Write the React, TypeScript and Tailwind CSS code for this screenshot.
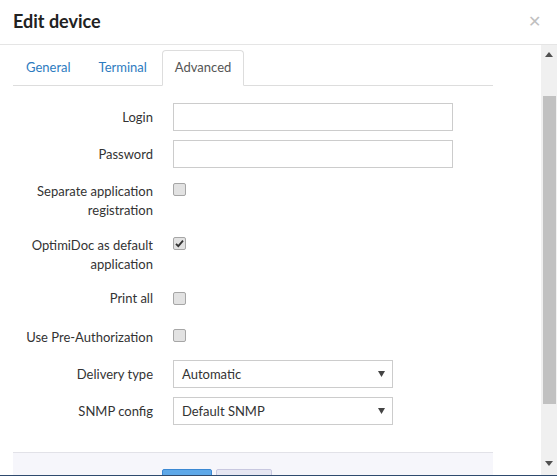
import { useState } from "react";

const font = { fontFamily: "Lato, 'Open Sans', sans-serif" };

function Checkbox({ checked }: { checked?: boolean }) {
  return (
    <div className="w-[13px] h-[13px] rounded-[2px] border border-[#a6a6a6] bg-[#e2e2e2] flex items-center justify-center">
      {checked && (
        <svg width="9" height="9" viewBox="0 0 9 9">
          <path d="M1 4.8 L3.3 7.2 L8 1.6" stroke="#333" strokeWidth="1.8" fill="none" />
        </svg>
      )}
    </div>
  );
}

function Select({ value }: { value: string }) {
  return (
    <div className="w-[220px] h-[28px] border border-[#ccc] flex items-center justify-between pl-[8px] pr-[7px] text-[13px] text-[#333]">
      <span>{value}</span>
      <svg width="7" height="6" viewBox="0 0 7 6">
        <path d="M0 0 H7 L3.5 6 Z" fill="#444" />
      </svg>
    </div>
  );
}

export default function App() {
  const [tab] = useState("Advanced");
  const tabs = ["General", "Terminal", "Advanced"];

  return (
    <div className="w-[557px] h-[476px] bg-white flex flex-col overflow-hidden text-[#333]" style={font}>
      {/* header */}
      <div className="h-[45px] shrink-0 border-b border-[#e5e5e5] flex items-center justify-between pl-[13px] pr-[16px]">
        <h1 className="text-[18px] font-bold text-[#222] leading-none mt-[-2px]">Edit device</h1>
        <span className="text-[#c0c0c0] text-[16px] leading-none mt-[-3px]">✕</span>
      </div>

      <div className="flex flex-1 min-h-0">
        {/* body */}
        <div className="flex-1 min-w-0 overflow-hidden flex flex-col">
          <div className="ml-[13px] w-[480px] pt-[5px]">
            <div className="flex border-b border-[#ddd] text-[13px] leading-[19px]">
              {tabs.map((t) =>
                t === tab ? (
                  <div
                    key={t}
                    className="px-[12px] pt-[7px] pb-[7px] border border-[#ddd] border-b-white rounded-t-[4px] -mb-px bg-white text-[#555] mr-[2px]"
                  >
                    {t}
                  </div>
                ) : (
                  <div
                    key={t}
                    className="px-[12px] pt-[7px] pb-[7px] border border-transparent text-[#2d7bc0] mr-[2px]"
                  >
                    {t}
                  </div>
                )
              )}
            </div>

            <div className="text-[13px] leading-[19px]">
              <div className="flex mt-[17px] items-center">
                <div className="w-[140px] text-right">Login</div>
                <div className="ml-[20px] w-[280px] h-[28px] border border-[#ccc]" />
              </div>
              <div className="flex mt-[9px] items-center">
                <div className="w-[140px] text-right">Password</div>
                <div className="ml-[20px] w-[280px] h-[28px] border border-[#ccc]" />
              </div>
              <div className="flex mt-[14px] items-start">
                <div className="w-[140px] text-right">
                  Separate application
                  <br />
                  registration
                </div>
                <div className="ml-[20px] mt-[1px]">
                  <Checkbox />
                </div>
              </div>
              <div className="flex mt-[16px] items-start">
                <div className="w-[140px] text-right">
                  OptimiDoc as default
                  <br />
                  application
                </div>
                <div className="ml-[20px] mt-[1px]">
                  <Checkbox checked />
                </div>
              </div>
              <div className="flex mt-[15px] items-start">
                <div className="w-[140px] text-right">Print all</div>
                <div className="ml-[20px] mt-[3px]">
                  <Checkbox />
                </div>
              </div>
              <div className="flex mt-[20px] items-start">
                <div className="w-[140px] text-right">Use Pre-Authorization</div>
                <div className="ml-[20px] mt-[1px]">
                  <Checkbox />
                </div>
              </div>
              <div className="flex mt-[13px] items-center">
                <div className="w-[140px] text-right">Delivery type</div>
                <div className="ml-[20px]">
                  <Select value="Automatic" />
                </div>
              </div>
              <div className="flex mt-[9px] items-center">
                <div className="w-[140px] text-right">SNMP config</div>
                <div className="ml-[20px]">
                  <Select value="Default SNMP" />
                </div>
              </div>
            </div>

            {/* footer */}
            <div className="mt-[27px] border-t border-[#e2e2e8] bg-[#f6f6fb] h-[40px] flex items-start pt-[16px] pl-[149px] gap-[4px]">
              <div className="w-[50px] h-[20px] bg-[#5ea8e8] border border-[#3b88d3] rounded-[2px]" />
              <div className="w-[56px] h-[20px] bg-[#e6e6f2] border border-[#c8c8e0] rounded-[2px]" />
            </div>
          </div>
        </div>

        {/* scrollbar */}
        <div className="w-[16px] shrink-0 bg-[#f0f0f0] flex flex-col items-center">
          <div className="h-[17px] flex items-center justify-center mt-[1px]">
            <svg width="8" height="5" viewBox="0 0 8 5">
              <path d="M0 5 L4 0 L8 5 Z" fill="#505050" />
            </svg>
          </div>
          <div className="mt-[33px] w-[13px] h-[308px] bg-[#c1c1c1] ml-[1px]" />
          <div className="flex-1" />
          <div className="h-[17px] flex items-center justify-center mb-[3px]">
            <svg width="8" height="5" viewBox="0 0 8 5">
              <path d="M0 0 L8 0 L4 5 Z" fill="#505050" />
            </svg>
          </div>
        </div>
      </div>
      <div className="h-px shrink-0 bg-[#2e4a6e]" />
    </div>
  );
}
